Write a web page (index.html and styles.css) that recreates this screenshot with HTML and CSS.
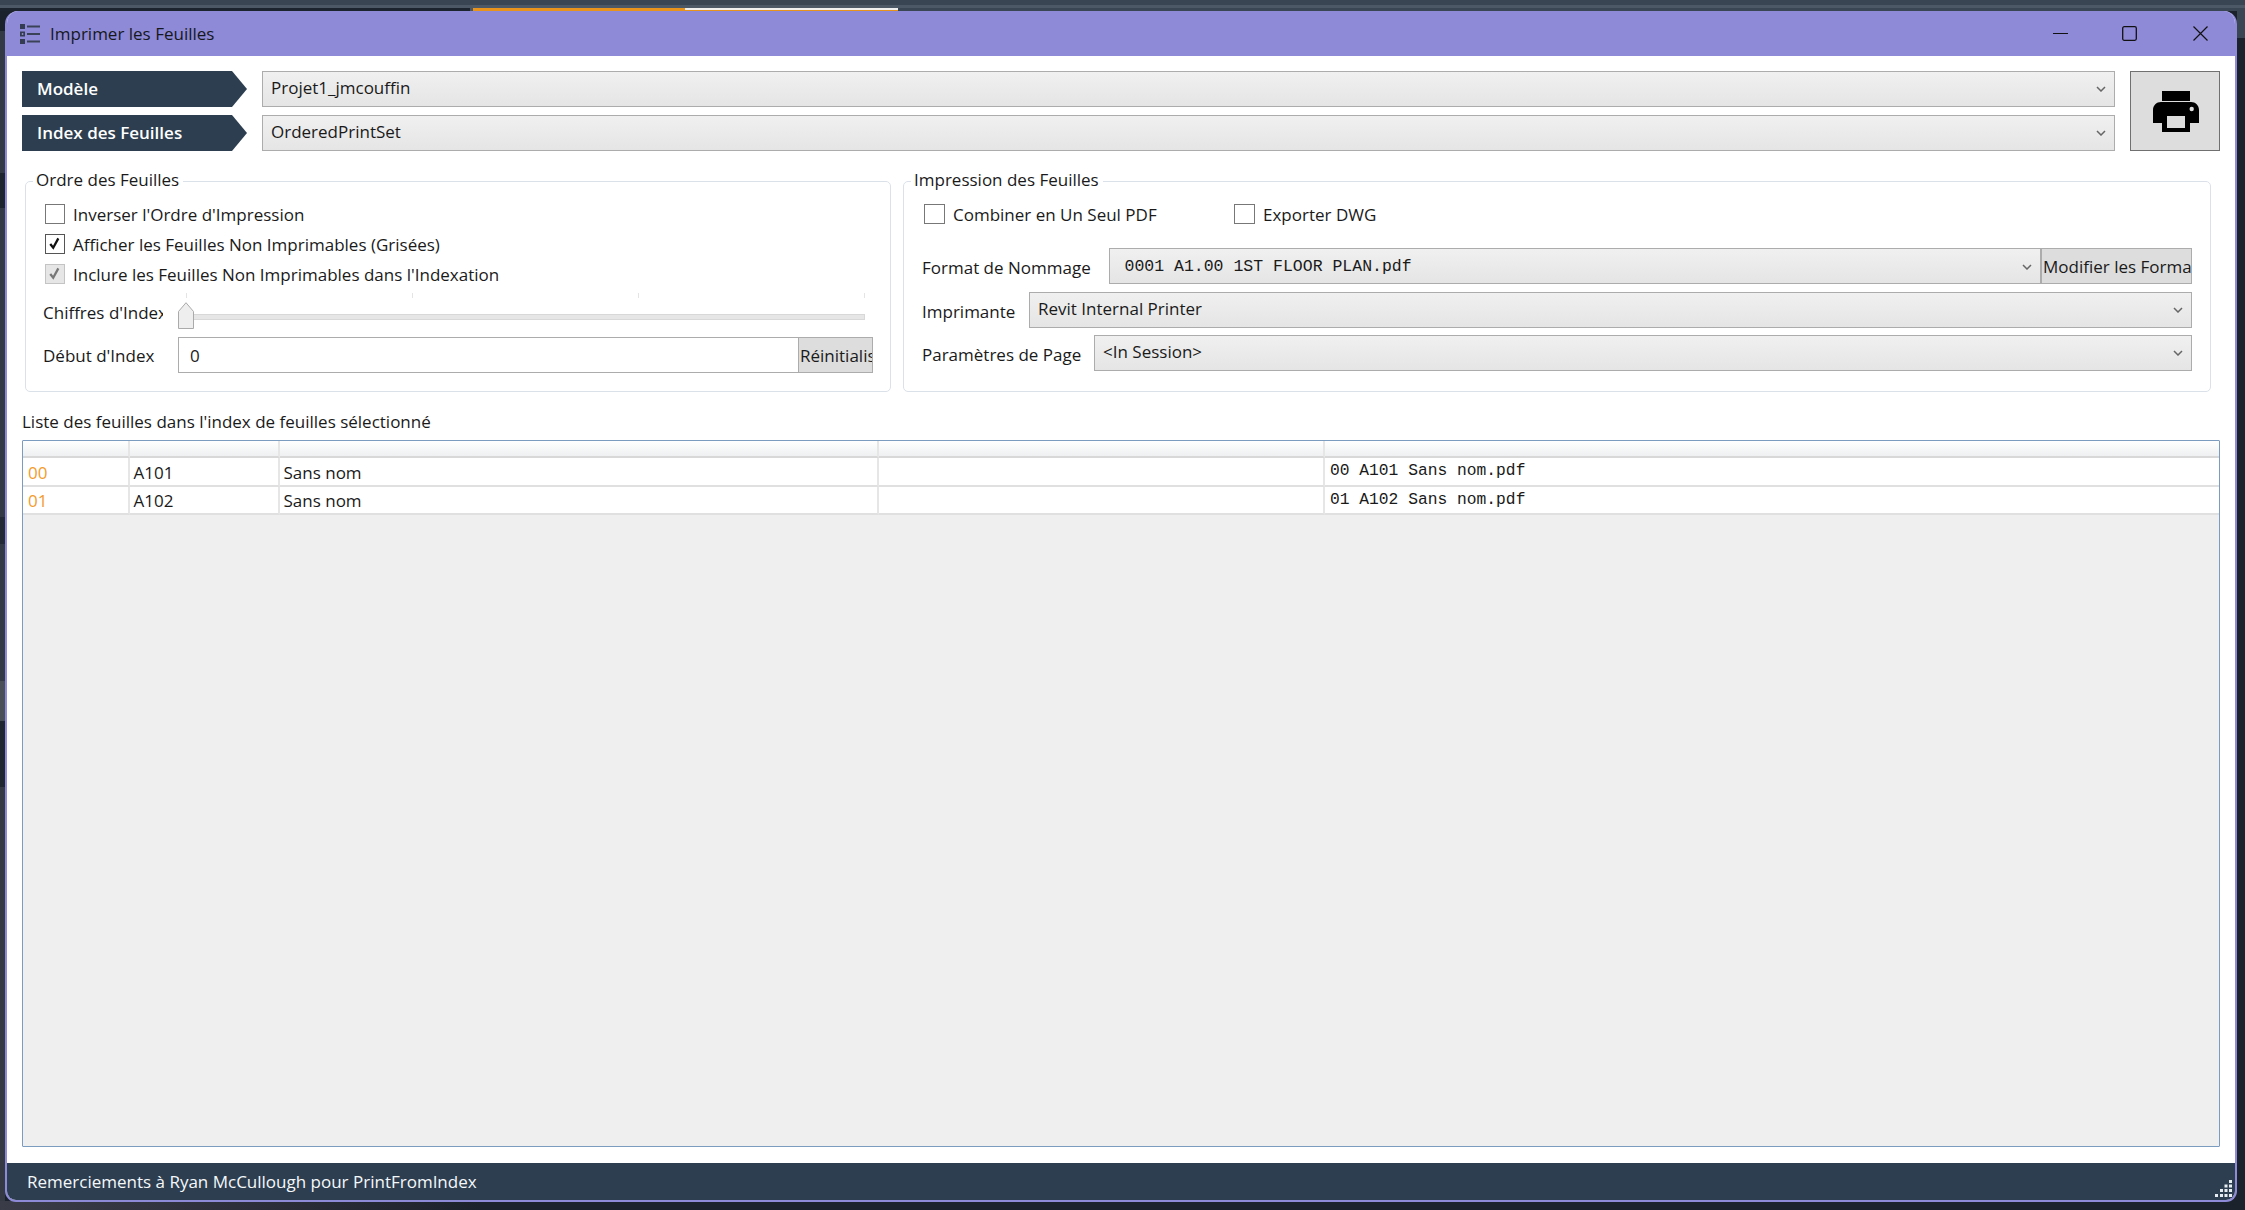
FILE: index.html
```html
<!DOCTYPE html>
<html lang="fr">
<head>
<meta charset="utf-8">
<title>Imprimer les Feuilles</title>
<link rel="stylesheet" href="styles.css">
</head>
<body>
<div class="desk-top">
  <div class="band band-a"></div>
  <div class="band band-b"></div>
  <div class="band-tabs"><span class="tab-gap"></span><span class="tab tab-orange"></span><span class="tab tab-white"></span><span class="tab-rest"></span></div>
</div>
<div class="desk-left"></div>
<div class="desk-right"></div>
<div class="desk-bottom"></div>
<main class="window">
  <header class="titlebar">
    <svg class="app-icon" viewBox="0 0 20 20" aria-hidden="true"><path fill="#333c50" d="M0 0h5v5H0zM0 7.500h5v5H0zM0 15h5v5H0z"/><path fill="#a9a6e2" d="M1.800 9.200h1.500v1.600H1.800z"/><path stroke="#3a4258" stroke-width="1.800" d="M7 2.500h13M7 10h13M7 17.500h13"/></svg>
    <span class="title">Imprimer les Feuilles</span>
    <div class="win-controls">
      <svg class="wc wc-min" viewBox="0 0 15 15"><path d="M0 7.500h15" stroke="#111" stroke-width="1.200"/></svg>
      <svg class="wc wc-max" viewBox="0 0 15 15"><rect x=".7" y=".7" width="13.600" height="13.600" rx="1.500" fill="none" stroke="#111" stroke-width="1.300"/></svg>
      <svg class="wc wc-close" viewBox="0 0 15 15"><path d="M.5.500l14 14M14.500.500l-14 14" stroke="#111" stroke-width="1.200"/></svg>
    </div>
  </header>

  <div class="content">
    <section class="top">
      <div class="arrow">Modèle</div>
      <div class="combo"><span>Projet1_jmcouffin</span><svg class="chev" viewBox="0 0 10 6"><path d="M1 1l4 4 4-4" fill="none" stroke="#666" stroke-width="1.500"/></svg></div>
      <button class="print-btn" aria-label="Imprimer">
        <svg viewBox="0 0 46 41"><path fill="#000" d="M9 0h28v10H9zM8 11h30c4.500 0 8 3.500 8 8v13h-9v9H9v-9H0V19c0-4.500 3.500-8 8-8z"/><path fill="#ddd" d="M14 25h18v12H14z"/><circle cx="38.700" cy="18" r="2.200" fill="#ddd"/></svg>
      </button>
      <div class="arrow">Index des Feuilles</div>
      <div class="combo"><span>OrderedPrintSet</span><svg class="chev" viewBox="0 0 10 6"><path d="M1 1l4 4 4-4" fill="none" stroke="#666" stroke-width="1.500"/></svg></div>
    </section>

    <section class="groups">
      <fieldset class="group group-left">
        <legend>Ordre des Feuilles</legend>
        <div class="checks">
          <div class="check"><span class="box"></span>Inverser l'Ordre d'Impression</div>
          <div class="check"><span class="box box-on"><svg viewBox="0 0 20 20"><path d="M5 10.500l3.500 4.500L14.500 4" fill="none" stroke="#111" stroke-width="2.700"/></svg></span>Afficher les Feuilles Non Imprimables (Grisées)</div>
          <div class="check"><span class="box box-dis"><svg viewBox="0 0 20 20"><path d="M5 10.500l3.500 4.500L14.500 4" fill="none" stroke="#777" stroke-width="2.700"/></svg></span>Inclure les Feuilles Non Imprimables dans l'Indexation</div>
        </div>
        <div class="slider-row">
          <span class="row-label">Chiffres d'Index</span>
          <div class="slider">
            <div class="ticks"><i></i><i></i><i></i><i></i></div>
            <div class="track"></div>
            <svg class="thumb" viewBox="0 0 16 27"><path d="M.5 26.500V9.500L8 .7l7.500 8.800v17z" fill="#eee" stroke="#aaa"/></svg>
          </div>
        </div>
        <div class="index-row">
          <span class="row-label">Début d'Index</span>
          <div class="textbox">0</div>
          <div class="btn btn-reset"><span>Réinitialiser</span></div>
        </div>
      </fieldset>

      <fieldset class="group group-right">
        <legend>Impression des Feuilles</legend>
        <div class="checks-inline">
          <div class="check check-wide"><span class="box box-lg"></span>Combiner en Un Seul PDF</div>
          <div class="check"><span class="box box-lg"></span>Exporter DWG</div>
        </div>
        <div class="form-rows">
          <div class="form-row">
            <span class="form-label fl-format">Format de Nommage</span>
            <div class="combo combo-mono"><span>0001 A1.00 1ST FLOOR PLAN.pdf</span><svg class="chev" viewBox="0 0 10 6"><path d="M1 1l4 4 4-4" fill="none" stroke="#666" stroke-width="1.500"/></svg></div>
            <div class="btn btn-format"><span>Modifier les Formats</span></div>
          </div>
          <div class="form-row">
            <span class="form-label fl-printer">Imprimante</span>
            <div class="combo"><span>Revit Internal Printer</span><svg class="chev" viewBox="0 0 10 6"><path d="M1 1l4 4 4-4" fill="none" stroke="#666" stroke-width="1.500"/></svg></div>
          </div>
          <div class="form-row form-row-last">
            <span class="form-label fl-page">Paramètres de Page</span>
            <div class="combo"><span>&lt;In Session&gt;</span><svg class="chev" viewBox="0 0 10 6"><path d="M1 1l4 4 4-4" fill="none" stroke="#666" stroke-width="1.500"/></svg></div>
          </div>
        </div>
      </fieldset>
    </section>

    <p class="list-label">Liste des feuilles dans l'index de feuilles sélectionné</p>

    <div class="grid-wrap">
      <table class="sheets">
        <colgroup><col class="c1"><col class="c2"><col class="c3"><col class="c4"><col></colgroup>
        <thead><tr><th></th><th></th><th></th><th></th><th></th></tr></thead>
        <tbody>
          <tr><td class="idx">00</td><td>A101</td><td>Sans nom</td><td></td><td class="mono">00 A101 Sans nom.pdf</td></tr>
          <tr><td class="idx">01</td><td>A102</td><td>Sans nom</td><td></td><td class="mono">01 A102 Sans nom.pdf</td></tr>
        </tbody>
      </table>
    </div>
  </div>

  <footer class="statusbar">
    <span>Remerciements à Ryan McCullough pour PrintFromIndex</span>
    <svg class="grip" viewBox="0 0 17 17"><g fill="#e8edf2"><rect x="14" y="0" width="3" height="3"/><rect x="14" y="4.500" width="3" height="3"/><rect x="9.500" y="4.500" width="3" height="3"/><rect x="14" y="9" width="3" height="3"/><rect x="9.500" y="9" width="3" height="3"/><rect x="5" y="9" width="3" height="3"/><rect x="14" y="14" width="3" height="3"/><rect x="9.500" y="14" width="3" height="3"/><rect x="5" y="14" width="3" height="3"/><rect x="0" y="14" width="3" height="3"/></g></svg>
  </footer>
</main>
</body>
</html>
```

FILE: styles.css
```css
* { box-sizing: border-box; }
html, body { margin: 0; height: 100%; }
body {
  width: 2245px;
  height: 1210px;
  overflow: hidden;
  background: #1c222c;
  font-family: "Open Sans", "Noto Sans", sans-serif;
  font-size: 17px;
  color: #1a1a1a;
  position: relative;
}

/* desktop showing behind the window */
.desk-top { position: absolute; inset: 0 0 auto 0; }
.band-a { height: 5px; background: #394553; }
.band-b { height: 3px; background: #4c5866; }
.band-tabs { display: flex; height: 3px; }
.tab-gap { width: 473px; background: linear-gradient(90deg, #1c2430 470px, #4c5866 470px); }
.tab { height: 3px; }
.tab-orange { width: 212px; background: #e8941c; }
.tab-white { width: 213px; background: linear-gradient(#eeeeee 2px, #e8941c 2px); }
.tab-rest { flex: 1; background: #3a4654; }
.desk-left {
  position: absolute;
  left: 0;
  top: 31px;
  width: 5px;
  height: 1179px;
  background: linear-gradient(#343a45 0 142px, #1e242e 142px 177px, #343a45 177px 486px, #242a35 486px 513px, #343a45 513px 650px, #4a4e56 650px 690px, #20262f 690px 756px, #343944 756px);
}
.desk-right {
  position: absolute;
  right: 0;
  top: 11px;
  width: 8px;
  height: 27px;
  background: #3a4654;
}
.desk-bottom {
  position: absolute;
  left: 0;
  bottom: 0;
  width: 480px;
  height: 9px;
  background: linear-gradient(90deg, #3a3d48, #2a2d38 60%, #1c222c);
}

.window {
  position: absolute;
  left: 5px;
  top: 11px;
  width: 2232px;
  height: 1191px;
  display: flex;
  flex-direction: column;
  background: #fff;
  border: 2px solid #8e8ad8;
  border-top: 0;
  border-radius: 13px 13px 11px 11px;
  overflow: hidden;
}

.titlebar {
  height: 45px;
  flex: none;
  background: #8e8ad8;
  display: flex;
  align-items: center;
  padding-left: 13px;
  color: #16181c;
}
.app-icon { width: 20px; height: 20px; flex: none; }
.title { margin-left: 10px; }
.win-controls { margin-left: auto; display: flex; align-items: center; }
.wc { width: 15px; height: 15px; display: block; }
.wc-max { margin-left: 54px; }
.wc-close { margin-left: 56px; margin-right: 27px; }

.content {
  flex: 1;
  min-height: 0;
  padding: 15px 15px 16px;
  display: flex;
  flex-direction: column;
}

.top {
  display: grid;
  grid-template-columns: 225px 1fr 90px;
  grid-template-rows: 36px 36px;
  gap: 8px 15px;
}
.arrow {
  background: #2c3e50;
  color: #fff;
  font-weight: 600;
  padding: 0 0 1px 15px;
  display: flex;
  align-items: center;
  clip-path: polygon(0 0, 210px 0, 100% 50%, 210px 100%, 0 100%);
}
.combo {
  flex: 1;
  min-width: 0;
  height: 36px;
  display: flex;
  align-items: center;
  justify-content: space-between;
  padding: 0 8px 3px 8px;
  background: linear-gradient(#f0f0f0, #e5e5e5);
  border: 1.500px solid #acacac;
  white-space: nowrap;
}
.chev { width: 10px; height: 6px; flex: none; margin-top: 3px; }
.print-btn {
  grid-column: 3;
  grid-row: 1 / span 2;
  padding: 0;
  background: #dddddd;
  border: 1.500px solid #707070;
  display: flex;
  align-items: center;
  justify-content: center;
}
.print-btn svg { width: 46px; height: 41px; display: block; margin-left: 1px; }

.groups {
  display: grid;
  grid-template-columns: 866px 1308px;
  column-gap: 12px;
  margin: 18px 0 0 3px;
}
.group {
  margin: 0;
  padding: 0;
  height: 223px;
  border: 1px solid #dbe1e8;
  border-radius: 5px;
  min-width: 0;
}
.group legend {
  margin-left: 7px;
  padding: 0 4px 2px 3px;
  line-height: 22px;
}
.checks { padding: 11px 0 0 19px; display: grid; row-gap: 10px; }
.check { display: flex; align-items: center; height: 20px; gap: 8px; white-space: nowrap; }
.box { width: 20px; height: 20px; background: #fff; border: 1.500px solid #777; flex: none; display: block; }
.box svg { display: block; width: 17px; height: 17px; }
.box-on { border-color: #555; }
.box-dis { background: #e6e6e6; border-color: #c4c4c4; }
.box-lg { width: 21px; }

.slider-row, .index-row { display: flex; margin-left: 17px; }
.slider-row { margin-top: 9px; height: 36px; }
.row-label { width: 120px; overflow: hidden; white-space: nowrap; flex: none; }
.slider-row .row-label { align-self: center; margin-top: 3px; }
.slider { position: relative; margin-left: 15px; width: 687px; }
.ticks { display: flex; justify-content: space-between; padding: 0 0 0 8px; height: 5px; }
.ticks i { width: 1px; background: #e4e4e4; }
.track { position: absolute; left: 15px; right: 0; top: 21px; height: 6px; background: #e6e6e6; border: 1px solid #d8d8d8; }
.thumb { position: absolute; left: 0; top: 9px; width: 16px; height: 27px; display: block; }

.index-row { margin-top: 8px; height: 36px; align-items: center; }
.index-row .row-label { width: 135px; flex: none; }
.textbox {
  width: 620px;
  height: 36px;
  border: 1.500px solid #acacac;
  border-right: 0;
  padding-left: 11px;
  display: flex;
  align-items: center;
}
.btn {
  height: 36px;
  background: #dddddd;
  border: 1.500px solid #acacac;
  overflow: hidden;
  white-space: nowrap;
  display: flex;
  align-items: center;
  padding-left: 1px;
}
.btn-reset { width: 75px; }
.btn-format { width: 151px; border-left-width: 1px; flex: none; }

.checks-inline { display: flex; padding: 11px 0 0 20px; }
.check-wide { width: 310px; }
.form-rows { margin: 24px 18px 0 18px; display: grid; row-gap: 8px; }
.form-row { display: flex; align-items: center; }
.form-row-last { margin-top: -1px; }
.form-label { flex: none; white-space: nowrap; padding-top: 2px; }
.fl-format { width: 186.500px; }
.fl-printer { width: 107px; }
.fl-page { width: 172px; }
.combo-mono { font-family: "Liberation Mono", monospace; font-size: 16.500px; padding: 1px 8px 0 15px; }
.combo-mono .chev { margin-top: 0; }

.list-label { margin: 18px 0 0; height: 31px; line-height: 24px; }

.grid-wrap {
  flex: 1;
  min-height: 0;
  margin-top: -1px;
  background: #efefef;
  border: 1.500px solid #7c9cbf;
  border-radius: 1px;
}
.sheets {
  table-layout: fixed;
  border-collapse: separate;
  border-spacing: 0;
  width: 100%;
}
.c1 { width: 106.500px; }
.c2 { width: 150px; }
.c3 { width: 599.500px; }
.c4 { width: 446px; }
.sheets th {
  height: 17px;
  padding: 0;
  background: linear-gradient(#ffffff, #eef0f1);
  border-right: 2px solid #e6e6e6;
  border-bottom: 2px solid #d8d8d8;
}
.sheets td {
  height: 28.500px;
  padding: 2px 0 0 4px;
  background: #fff;
  border-right: 2px solid #e6e6e6;
  border-bottom: 2px solid #e0e0e0;
  white-space: nowrap;
}
.sheets th:last-child, .sheets td:last-child { border-right: 0; }
.sheets .idx { color: #f39c2c; padding-left: 5px; }
.sheets .mono { font-family: "Liberation Mono", monospace; font-size: 16.300px; padding: 0 0 1px 5px; }

.statusbar {
  flex: none;
  height: 37px;
  background: #2c3e50;
  color: #f5f8fa;
  display: flex;
  align-items: center;
  padding-left: 20px;
  position: relative;
}
.grip { position: absolute; right: 3px; bottom: 3px; width: 17px; height: 17px; }
```
